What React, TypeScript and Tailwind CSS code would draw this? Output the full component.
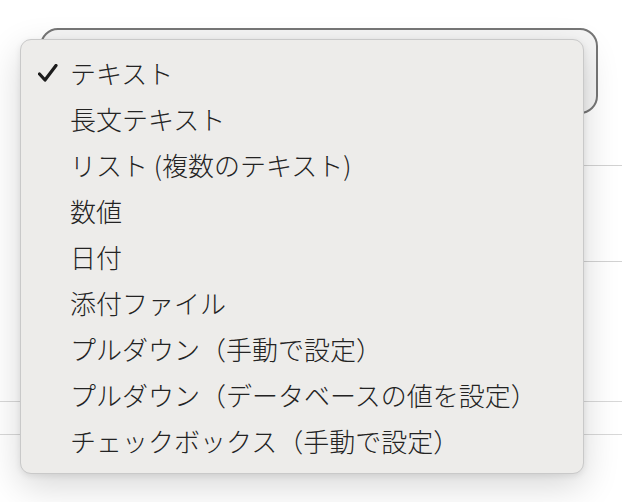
const items = [
  'テキスト',
  '長文テキスト',
  'リスト (複数のテキスト)',
  '数値',
  '日付',
  '添付ファイル',
  'プルダウン（手動で設定）',
  'プルダウン（データベースの値を設定）',
  'チェックボックス（手動で設定）',
]

function Check() {
  return (
    <svg width="20" height="18" viewBox="0 0 20 18" fill="none">
      <path d="M1.5 10 L7 16 L18 1.5" stroke="#1c1c1c" strokeWidth="3.2" strokeLinecap="round" strokeLinejoin="round" />
    </svg>
  )
}

export default function App() {
  const selected = 0

  return (
    <div className="relative w-[622px] h-[502px] overflow-hidden bg-white font-['Noto_Sans_CJK_JP',sans-serif]">
      {/* form behind the open menu */}
      <div className="pt-[28px] pl-[40px] pr-[24px]">
        <div className="h-[86px] rounded-[18px] border-2 border-[#767676] bg-[#f5f5f5]" />
      </div>
      <div className="mt-[51px] ml-[40px] h-px bg-[#d2d2d2]" />
      <div className="mt-[95px] ml-[40px] h-px bg-[#d2d2d2]" />
      <div className="mt-[139px] h-px bg-[#d8d8d8]" />
      <div className="mt-[32px] h-px bg-[#d8d8d8]" />

      {/* dropdown menu */}
      <div className="absolute left-[20px] top-[39px] w-[564px] h-[435px] rounded-[11px] border border-[#c9c9c9] bg-[#edecea] pt-[10px] pb-[10px] shadow-[0_12px_36px_rgba(0,0,0,0.16),0_2px_6px_rgba(0,0,0,0.08)]">
        {items.map((label, i) => (
          <div key={label} className="flex items-center h-[46px] pl-[17px] text-[26px] font-[300] text-[#232323] leading-none">
            <span className="w-[32px] flex items-center">{i === selected && <Check />}</span>
            <span>{label}</span>
          </div>
        ))}
      </div>
    </div>
  )
}
